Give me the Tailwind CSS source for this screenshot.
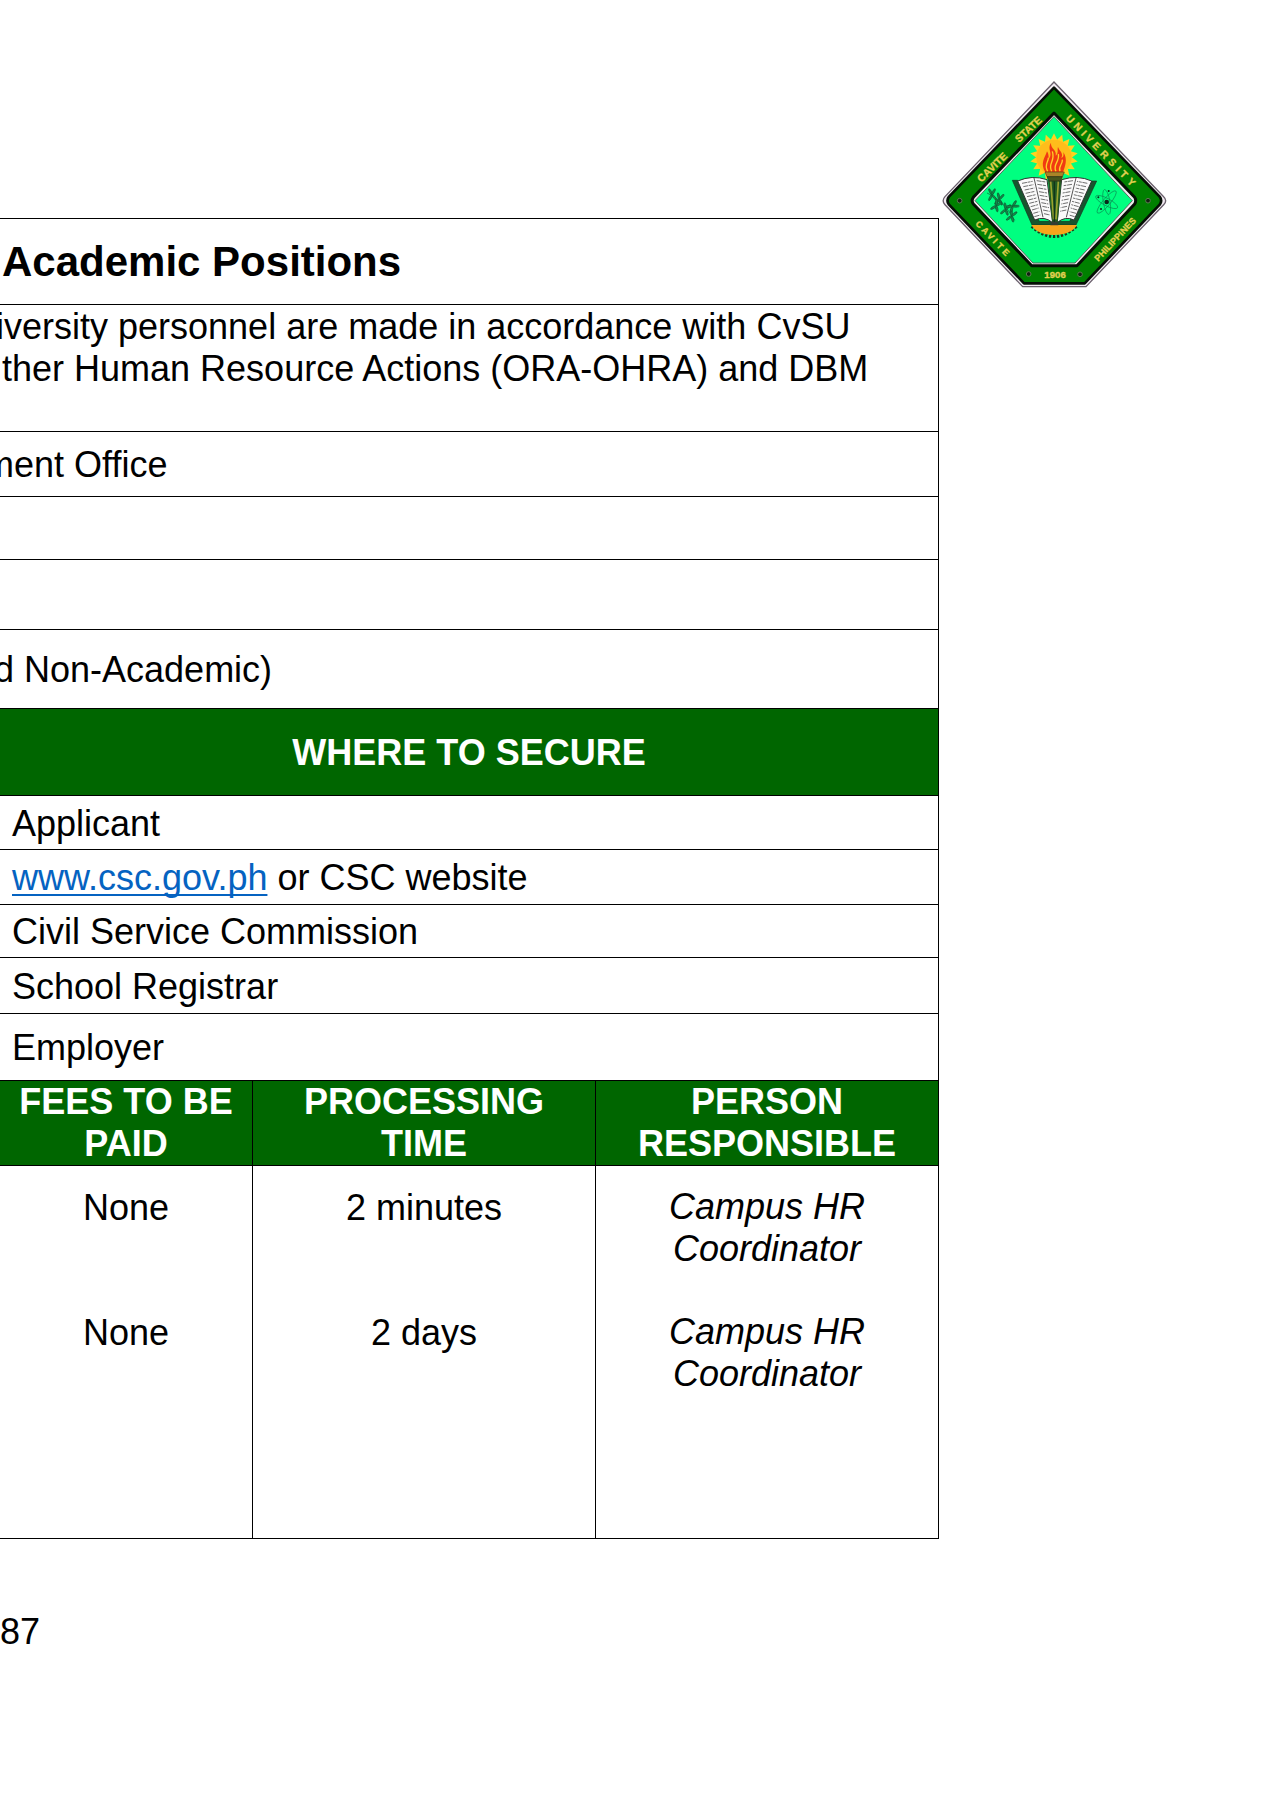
<!DOCTYPE html>
<html lang="en">
<head>
<meta charset="utf-8">
<meta name="viewport" content="width=device-width, initial-scale=1">
<title>Academic Positions</title>
<script src="https://cdn.jsdelivr.net/npm/@tailwindcss/browser@4"></script>
</head>
<body class="min-h-screen overflow-x-hidden bg-white font-['Liberation_Sans',Arial,sans-serif] text-[36px] leading-[42px] text-black">
<div class="flex items-start">
  <main class="min-w-0 flex-1 pt-[218px]">
    <table class="w-full table-fixed border-collapse border-y border-r border-black">
      <colgroup><col><col class="w-[343px]"><col class="w-[343px]"></colgroup>
      <tbody>
        <tr class="h-[86px] border-b border-black"><th colspan="3" class="pl-0.5 text-left text-[42px] font-bold"><h1>Academic Positions</h1></th></tr>
        <tr class="h-[127px] border-b border-black"><td colspan="3" class="pt-px align-top whitespace-nowrap"><p class="-ml-1">iversity personnel are made in accordance with CvSU</p><p class="pl-0.5">ther Human Resource Actions (ORA-OHRA) and DBM</p></td></tr>
        <tr class="h-[65px] border-b border-black"><td colspan="3" class="pt-0.5"><p class="-ml-4">ment Office</p></td></tr>
        <tr class="h-[63px] border-b border-black"><td colspan="3"></td></tr>
        <tr class="h-[70px] border-b border-black"><td colspan="3"></td></tr>
        <tr class="h-[79px] border-b border-black"><td colspan="3" class="pt-0.5"><p class="-ml-1.5">d Non-Academic)</p></td></tr>
        <tr class="h-[87px] border-b border-black bg-[#006600] text-white"><th colspan="3" class="pt-0.5 font-bold">WHERE TO SECURE</th></tr>
        <tr class="h-[54px] border-b border-black"><td colspan="3" class="pt-0.5 pl-3">Applicant</td></tr>
        <tr class="h-[55px] border-b border-black"><td colspan="3" class="pt-0.5 pl-3"><a href="http://www.csc.gov.ph" class="text-[#0563c1] underline decoration-2 underline-offset-4 [text-decoration-skip-ink:none]">www.csc.gov.ph</a> or CSC website</td></tr>
        <tr class="h-[53px] border-b border-black"><td colspan="3" class="pt-0.5 pl-3">Civil Service Commission</td></tr>
        <tr class="h-[56px] border-b border-black"><td colspan="3" class="pt-0.5 pl-3">School Registrar</td></tr>
        <tr class="h-[67px] border-b border-black"><td colspan="3" class="pt-0.5 pl-3">Employer</td></tr>
        <tr class="h-[85px] border-b border-black bg-[#006600] text-white">
          <th class="border-r border-black font-bold whitespace-nowrap">FEES TO BE<br>PAID</th>
          <th class="border-r border-black font-bold">PROCESSING<br>TIME</th>
          <th class="font-bold">PERSON<br>RESPONSIBLE</th>
        </tr>
        <tr class="h-[373px] text-center align-top">
          <td class="border-r border-black pt-[21px]"><p class="mb-[83px]">None</p><p>None</p></td>
          <td class="border-r border-black pt-[21px]"><p class="mb-[83px]">2 minutes</p><p>2 days</p></td>
          <td class="pt-5 italic"><p class="mb-[41px]">Campus HR<br>Coordinator</p><p>Campus HR<br>Coordinator</p></td>
        </tr>
      </tbody>
    </table>
    <footer class="pt-[72px]">87</footer>
  </main>
  <aside class="w-[334px] shrink-0 pt-20 pl-[3px]">
    <svg class="h-[210px] w-[225px]" viewBox="35 30 675 630" role="img" aria-label="Cavite State University seal" font-family="Liberation Sans, Arial, sans-serif" font-weight="bold">
      <defs>
        <g id="rays" fill="#ffd21f">
          <path d="M358 216 371 190 384 216Z"/>
          <path d="M358 216 371 190 384 216Z" transform="rotate(20 371 262)"/>
          <path d="M358 216 371 190 384 216Z" transform="rotate(40 371 262)"/>
          <path d="M358 216 371 190 384 216Z" transform="rotate(60 371 262)"/>
          <path d="M358 216 371 190 384 216Z" transform="rotate(80 371 262)"/>
          <path d="M358 216 371 190 384 216Z" transform="rotate(100 371 262)"/>
        </g>
        <g id="leaves" fill="#178a4a" stroke="#0b5a33" stroke-width="2">
          <ellipse cx="0" cy="-10" rx="3" ry="10" transform="rotate(-28)"/>
          <ellipse cx="0" cy="-10" rx="3" ry="10" transform="rotate(28)"/>
          <ellipse cx="0" cy="10" rx="3" ry="10" transform="rotate(28)"/>
          <ellipse cx="0" cy="10" rx="3" ry="9" transform="rotate(-40)"/>
        </g>
      </defs>
      <!-- frame -->
      <path d="M371 36 700 380Q712 392 700 404L467 650H277L44 404Q33 392 44 380Z" fill="#f2eaf2" stroke="#6a606c" stroke-width="4"/>
      <path d="M371 53 688 380Q697 392 688 404L463 640H281L56 404Q47 392 56 380Z" fill="#008000" stroke="#050f05" stroke-width="8" stroke-linejoin="round"/>
      <path d="M371 129 613 382Q619 392 613 402L440 587H304L129 402Q122 392 129 382Z" fill="#eee" stroke="#050f05" stroke-width="9" stroke-linejoin="round"/>
      <path d="M371 140 606 392 434 579H308L134 392Z" fill="#00ff80" stroke="#5b6960" stroke-width="3"/>
      <!-- lettering -->
      <g fill="#e3d052" stroke="#e3d052" stroke-width="1">
        <text font-size="31" transform="translate(153 338) rotate(-44)">CAVITE</text>
        <text font-size="31" transform="translate(266 219) rotate(-43)">STATE</text>
        <text font-size="30" x="0 33 66 83 114 148 182 214 233 264" transform="translate(405 146) rotate(46)">UNIVERSITY</text>
        <text font-size="26" x="0 26 50 75 91 116" transform="translate(134 463) rotate(46)">CAVITE</text>
        <text font-size="27" transform="translate(504 576) rotate(-47)">PHILIPPINES</text>
        <text font-size="29" x="342" y="625">1906</text>
      </g>
      <g fill="#122012" stroke="#5c7a50" stroke-width="3"><circle cx="88" cy="392" r="7"/><circle cx="653" cy="392" r="7"/><circle cx="295" cy="612" r="7"/><circle cx="449" cy="613" r="7"/></g>
      <!-- sun and flame -->
      <use href="#rays"/><use href="#rays" transform="rotate(120 371 262)"/><use href="#rays" transform="rotate(240 371 262)"/>
      <circle cx="371" cy="262" r="53" fill="#ffbd1b"/>
      <path d="M345 307C328 279 344 264 350 244C356 252 354 260 356 266C369 249 349 237 362 218C360 237 380 238 376 257C386 250 380 238 383 231C389 246 400 249 393 264C401 262 400 251 399 246C414 270 403 290 398 307Z" fill="#f03a12"/>
      <path d="M352 304C340 282 355 277 354 263M364 304C351 280 376 275 366 244M377 304C365 284 389 277 384 252M389 304C382 289 398 284 396 269" fill="none" stroke="#ffd226" stroke-width="4"/>
      <!-- book -->
      <path d="M246 331H262L327 454H418L483 333H499L437 465H305Z" fill="#17552e" stroke="#123821" stroke-width="2"/>
      <path d="M262 333Q305 314 350 329L367 458Q342 437 313 450Z" fill="#fafafa" stroke="#333" stroke-width="3"/>
      <path d="M484 333Q442 314 394 329L380 458Q405 437 431 450Z" fill="#fafafa" stroke="#333" stroke-width="3"/>
      <path d="M311 324 338 442M437 324 408 442" stroke="#555" stroke-width="3"/>
      <g fill="none" stroke="#707070" stroke-width="3" stroke-dasharray="15 2 9 2">
        <path d="M275 340 307 334M279 350 309 344M283 360 312 354M286 370 314 364M290 380 316 374M294 390 318 384M297 400 321 394M301 410 323 404M305 420 325 414M309 430 327 425M312 440 330 435"/>
        <path d="M319 332 346 336M321 343 347 347M324 354 348 358M326 365 350 369M328 376 351 380M331 387 353 391M333 398 354 402M336 409 356 413M338 420 358 424M341 431 359 435"/>
        <path d="M471 340 440 334M467 350 437 344M463 360 435 354M460 370 432 364M456 380 430 374M452 390 428 384M448 400 425 394M445 410 423 404M441 420 421 414M437 430 418 425M433 440 416 435"/>
        <path d="M428 332 401 336M425 343 400 347M423 354 399 358M420 365 397 369M418 376 396 380M415 387 394 391M413 398 393 402M410 409 391 413M408 420 389 424"/>
      </g>
      <!-- torch -->
      <path d="M353 331H393L382 461H366Z" fill="#245a22"/>
      <path d="M361 334 370 448M384 334 377 448" stroke="#9ba42f" stroke-width="5"/>
      <path d="M372 334V460" stroke="#12351a" stroke-width="4"/>
      <path d="M344 306H402L396 320H350Z" fill="#aa8427" stroke="#504016" stroke-width="2"/>
      <path d="M350 320H396L391 333H356Z" fill="#47551d" stroke="#262e15" stroke-width="2"/>
      <!-- half gear -->
      <path d="M304 469Q371 530 439 469" fill="none" stroke="#193a1f" stroke-width="9" stroke-dasharray="7 5"/>
      <path d="M303 465H440Q423 494 371 495Q320 494 303 465Z" fill="#f8a51b"/>
      <path d="M362 455H382L384 466H360Z" fill="#333d32"/>
      <!-- branch -->
      <path d="M170 369Q215 385 253 451M203 390 195 417M223 411 260 407" fill="none" stroke="#0b5a33" stroke-width="2"/>
      <use href="#leaves" transform="translate(185 374)"/><use href="#leaves" transform="translate(207 388) rotate(15)"/><use href="#leaves" transform="translate(198 407) rotate(30)"/><use href="#leaves" transform="translate(226 418) rotate(20)"/><use href="#leaves" transform="translate(244 438) rotate(25)"/><use href="#leaves" transform="translate(247 409) rotate(60)"/>
      <!-- atom -->
      <g fill="none" stroke="#0a8a52" stroke-width="2">
        <ellipse cx="529" cy="396" rx="37" ry="11" transform="rotate(28 529 396)"/>
        <ellipse cx="529" cy="396" rx="43" ry="11" transform="rotate(-50 529 396)"/>
        <ellipse cx="529" cy="396" rx="38" ry="10" transform="rotate(80 529 396)"/>
      </g>
      <g fill="#08291b"><circle cx="529" cy="396" r="7"/><circle cx="535" cy="363" r="3"/><circle cx="504" cy="382" r="3"/><circle cx="512" cy="417" r="3"/></g>
    </svg>
  </aside>
</div>
</body>
</html>
